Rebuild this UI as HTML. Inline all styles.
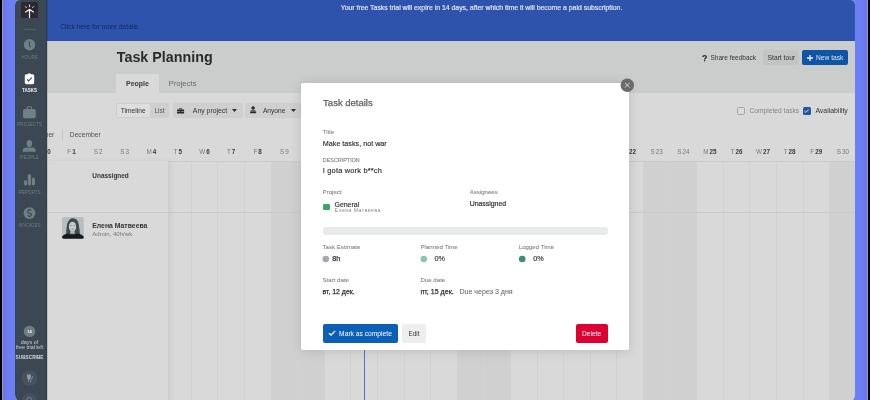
<!DOCTYPE html>
<html><head><meta charset="utf-8"><style>
*{box-sizing:border-box;margin:0;padding:0}
html,body{width:870px;height:400px;overflow:hidden;background:#000}
body{position:relative;font-family:"Liberation Sans",sans-serif;color:#333}
.a{position:absolute;white-space:nowrap;line-height:1}
svg{position:absolute;overflow:visible}
#glow{position:absolute;left:2.3px;top:-30px;width:865.5px;height:450px;background:#6a80f4;border-radius:18px;border-left:1px solid #8a9ab8;border-right:1px solid #8a9ab8;box-shadow:inset 3px 0 3px rgba(125,95,225,.45),inset -3px 0 3px rgba(125,95,225,.45)}
#app{position:absolute;left:15px;top:0;width:840px;height:404px;background:#d9d9d9;border-radius:5px 5px 10px 10px;overflow:hidden}
#in{position:absolute;left:-15px;top:0;width:870px;height:408px;will-change:transform}
#side{position:absolute;left:15px;top:0;width:31.5px;height:408px;background:#3c4754}
#banner{position:absolute;left:46px;top:0;width:810px;height:40.5px;background:#2d53ad}
#header{position:absolute;left:46px;top:40.5px;width:810px;height:52.3px;background:#cbcccc}
.col{position:absolute;top:161px;height:250px;width:1px;background:#d2d2d2}
.we{position:absolute;top:161px;height:250px;background:#d0d0d0}
.hl{position:absolute;left:46px;width:810px;height:1px;background:#cbcbcb}
.day{position:absolute;top:148.6px;font-size:6.3px;color:#7a7a7a;width:26.6px;text-align:center;line-height:1;white-space:nowrap}
.day b{color:#3a3a3a;font-weight:bold;margin-left:1px}
.day i{font-style:normal;margin-left:1px}
.sl{position:absolute;width:31.5px;text-align:center;font-size:4.6px;color:#6e7b82;left:13.8px;line-height:1;white-space:nowrap}
#modal{position:absolute;left:301px;top:83px;width:328px;height:267px;background:#fff;border-radius:2px;box-shadow:0 1px 12px rgba(0,0,0,.13)}
.lbl{position:absolute;font-size:6.1px;color:#888;-webkit-text-stroke:0.1px #888;white-space:nowrap;line-height:1}
.val{position:absolute;font-size:7.1px;color:#2f2f2f;-webkit-text-stroke:0.15px #2f2f2f;white-space:nowrap;line-height:1}
.btn{position:absolute;border-radius:2px}
</style></head><body>
<div id="glow"></div><div id="app"><div id="in">
<div class="we" style="left:84.80px;width:26.60px"></div>
<div class="we" style="left:111.40px;width:26.60px"></div>
<div class="we" style="left:271.00px;width:26.60px"></div>
<div class="we" style="left:297.60px;width:26.60px"></div>
<div class="we" style="left:457.20px;width:26.60px"></div>
<div class="we" style="left:483.80px;width:26.60px"></div>
<div class="we" style="left:643.40px;width:26.60px"></div>
<div class="we" style="left:670.00px;width:26.60px"></div>
<div class="we" style="left:829.60px;width:26.60px"></div>
<div class="we" style="left:856.20px;width:26.60px"></div>
<div class="col" style="left:4.50px"></div>
<div class="col" style="left:31.10px"></div>
<div class="col" style="left:57.70px"></div>
<div class="col" style="left:84.30px"></div>
<div class="col" style="left:110.90px"></div>
<div class="col" style="left:137.50px"></div>
<div class="col" style="left:164.10px"></div>
<div class="col" style="left:190.70px"></div>
<div class="col" style="left:217.30px"></div>
<div class="col" style="left:243.90px"></div>
<div class="col" style="left:270.50px"></div>
<div class="col" style="left:297.10px"></div>
<div class="col" style="left:323.70px"></div>
<div class="col" style="left:350.30px"></div>
<div class="col" style="left:376.90px"></div>
<div class="col" style="left:403.50px"></div>
<div class="col" style="left:430.10px"></div>
<div class="col" style="left:456.70px"></div>
<div class="col" style="left:483.30px"></div>
<div class="col" style="left:509.90px"></div>
<div class="col" style="left:536.50px"></div>
<div class="col" style="left:563.10px"></div>
<div class="col" style="left:589.70px"></div>
<div class="col" style="left:616.30px"></div>
<div class="col" style="left:642.90px"></div>
<div class="col" style="left:669.50px"></div>
<div class="col" style="left:696.10px"></div>
<div class="col" style="left:722.70px"></div>
<div class="col" style="left:749.30px"></div>
<div class="col" style="left:775.90px"></div>
<div class="col" style="left:802.50px"></div>
<div class="col" style="left:829.10px"></div>
<div class="col" style="left:855.70px"></div>
<div class="hl" style="top:160.6px"></div>
<div class="hl" style="top:212px"></div>
<div class="day" style="left:58.20px">F<b>1</b></div>
<div class="day" style="left:84.80px">S<i>2</i></div>
<div class="day" style="left:111.40px">S<i>3</i></div>
<div class="day" style="left:138.00px">M<b>4</b></div>
<div class="day" style="left:164.60px">T<b>5</b></div>
<div class="day" style="left:191.20px">W<b>6</b></div>
<div class="day" style="left:217.80px">T<b>7</b></div>
<div class="day" style="left:244.40px">F<b>8</b></div>
<div class="day" style="left:271.00px">S<i>9</i></div>
<div class="day" style="left:297.60px">S<i>10</i></div>
<div class="day" style="left:324.20px">M<b>11</b></div>
<div class="day" style="left:350.80px">T<b>12</b></div>
<div class="day" style="left:377.40px">W<b>13</b></div>
<div class="day" style="left:404.00px">T<b>14</b></div>
<div class="day" style="left:430.60px">F<b>15</b></div>
<div class="day" style="left:457.20px">S<i>16</i></div>
<div class="day" style="left:483.80px">S<i>17</i></div>
<div class="day" style="left:510.40px">M<b>18</b></div>
<div class="day" style="left:537.00px">T<b>19</b></div>
<div class="day" style="left:563.60px">W<b>20</b></div>
<div class="day" style="left:590.20px">T<b>21</b></div>
<div class="day" style="left:616.80px">F<b>22</b></div>
<div class="day" style="left:643.40px">S<i>23</i></div>
<div class="day" style="left:670.00px">S<i>24</i></div>
<div class="day" style="left:696.60px">M<b>25</b></div>
<div class="day" style="left:723.20px">T<b>26</b></div>
<div class="day" style="left:749.80px">W<b>27</b></div>
<div class="day" style="left:776.40px">T<b>28</b></div>
<div class="day" style="left:803.00px">F<b>29</b></div>
<div class="day" style="left:829.60px">S<i>30</i></div>
<div class="day" style="left:31.60px">T<b>30</b></div>
<div class="a" style="left:23.5px;top:131.5px;font-size:6.7px;color:#555">November</div>
<div class="a" style="left:61.5px;top:128.5px;width:1px;height:11px;background:#c8c8c8"></div>
<div class="a" style="left:69.8px;top:131.5px;font-size:6.7px;color:#555">December</div>
<div class="a" style="left:364px;top:161px;width:1px;height:250px;background:#4a78b8"></div>
<div class="a" style="left:46px;top:161px;width:122.5px;height:250px;background:#d9d9d9;box-shadow:2px 0 5px rgba(0,0,0,.06);border-right:1px solid #cdcdcd"></div>
<div class="hl" style="top:212px;width:122px"></div>
<div class="a" style="left:92.3px;top:173px;font-size:6.45px;font-weight:bold;color:#333">Unassigned</div>
<div class="a" style="left:62.2px;top:217px;width:21.8px;height:21.8px;border-radius:2px;overflow:hidden"><svg style="left:0;top:0" width="21.8" height="21.8" viewBox="0 0 22 22"><g><rect width="22" height="22" fill="#b7bfc1"/><path d="M4.2 20 Q4 12 5.2 7 Q7 1.2 11.2 1.3 Q15.6 1.5 16.8 7 Q17.8 12 18.2 19.5 Z" fill="#3f4a4d"/><ellipse cx="10.6" cy="9.8" rx="3.7" ry="5" fill="#c6cacb"/><path d="M8.5 14 L12.6 14 L13 17 L8.2 17 Z" fill="#b0b5b6"/><path d="M8.3 8.6H9.6M11.6 8.6H12.9" stroke="#555" stroke-width="0.6"/><path d="M9.6 12.3H11.8" stroke="#777" stroke-width="0.6"/><path d="M0 22 V20 Q1.5 17.2 6 16.8 Q10.5 18.8 15.5 16.8 Q20.5 17.2 22 20 V22 Z" fill="#171b1d"/></g></svg></div>
<div class="a" style="left:92.3px;top:223.3px;font-size:6.85px;font-weight:bold;color:#333">Елена Матвеева</div>
<div class="a" style="left:92.3px;top:231px;font-size:6.1px;color:#777">Admin, 40h/wk</div>
<div id="banner"></div><div id="header"></div>
<div class="a" style="left:340.7px;top:4.5px;font-size:6.89px;color:#dfe3ee;-webkit-text-stroke:0.2px #dfe3ee">Your free Tasks trial will expire in 14 days, after which time it will become a paid subscription.</div>
<div class="a" style="left:60.2px;top:23.9px;font-size:6.72px;color:#1c2850">Click here for more details</div>
<div class="a" style="left:116.8px;top:50.1px;font-size:14.3px;font-weight:bold;color:#2a2a2a">Task Planning</div>
<div class="a" style="left:116.3px;top:74.2px;width:42.5px;height:18.6px;background:#d9d9d9"></div>
<div class="a" style="left:126px;top:80.1px;font-size:7px;font-weight:bold;color:#3a3a3a">People</div>
<div class="a" style="left:168.5px;top:80.1px;font-size:7.8px;color:#6a6a6a">Projects</div>
<svg style="left:701.6px;top:54.6px" width="5" height="6.5" viewBox="0 0 5 6.5"><path d="M0.9 2Q0.9 0.6 2.6 0.6Q4.3 0.6 4.3 2Q4.3 2.9 3.3 3.3Q2.6 3.6 2.6 4.5" fill="none" stroke="#2a2a2a" stroke-width="1.35"/><circle cx="2.6" cy="5.8" r="0.75" fill="#2a2a2a"/></svg>
<div class="a" style="left:710.5px;top:55.3px;font-size:6.5px;color:#333">Share feedback</div>
<div class="btn" style="left:763.3px;top:50.3px;width:36.1px;height:14.3px;background:#c3c4c4"></div>
<div class="a" style="left:767.6px;top:55.3px;font-size:6.69px;color:#333">Start tour</div>
<div class="btn" style="left:802px;top:50.3px;width:45.5px;height:14.6px;background:#0f55a6"></div>
<svg style="left:806.5px;top:54.6px" width="6" height="6" viewBox="0 0 6 6"><path d="M3 0V6M0 3H6" stroke="#eef2f8" stroke-width="1.3"/></svg>
<div class="a" style="left:816px;top:55.3px;font-size:6.66px;color:#dbe3ef">New task</div>
<div class="btn" style="left:116.2px;top:103px;width:52.4px;height:14.5px;background:#cfcfcf"></div>
<div class="btn" style="left:117px;top:103.8px;width:33.2px;height:12.9px;background:#dedede;border-radius:1.5px"></div>
<div class="a" style="left:120.8px;top:107.9px;font-size:6.63px;color:#333">Timeline</div>
<div class="a" style="left:154.4px;top:107.9px;font-size:6.63px;color:#5a5a5a">List</div>
<div class="btn" style="left:172.8px;top:103px;width:69.8px;height:14.5px;background:#cfcfcf"></div>
<svg style="left:176.9px;top:107.5px" width="7.1" height="5.6" viewBox="0 0 7.1 5.6"><path d="M2.3 1.6V0.9Q2.3 0.4 2.8 0.4H4.3Q4.8 0.4 4.8 0.9V1.6" fill="none" stroke="#2a2a2a" stroke-width="0.8"/><rect x="0" y="1.5" width="7.1" height="4.1" rx="0.5" fill="#2a2a2a"/><rect x="0" y="3" width="7.1" height="0.5" fill="#cfcfcf"/><rect x="3" y="2.6" width="1.1" height="1.3" fill="#2a2a2a"/></svg>
<div class="a" style="left:192.8px;top:107.5px;font-size:6.88px;color:#333">Any project</div>
<svg style="left:232.3px;top:108.6px" width="5" height="3" viewBox="0 0 5 3"><path d="M0 0H5L2.5 3Z" fill="#2e2e2e"/></svg>
<div class="btn" style="left:245.2px;top:103px;width:60px;height:14.5px;background:#cfcfcf"></div>
<svg style="left:249.6px;top:106.1px" width="6.3" height="7.4" viewBox="0 0 6.3 7.4"><circle cx="3.1" cy="1.9" r="1.75" fill="#2a2a2a"/><path d="M0.1 7.3V5.7C0.1 4.7 1.2 4.2 3.1 4.2S6.2 4.7 6.2 5.7V7.3Z" fill="#2a2a2a"/><rect x="0" y="5.6" width="6.3" height="0.35" fill="#cfcfcf"/></svg>
<div class="a" style="left:262.9px;top:107.5px;font-size:6.63px;color:#333">Anyone</div>
<svg style="left:291px;top:108.6px" width="5" height="3" viewBox="0 0 5 3"><path d="M0 0H5L2.5 3Z" fill="#2e2e2e"/></svg>
<div class="btn" style="left:736.9px;top:106.8px;width:8px;height:7.8px;border:0.8px solid #a5a5a5;border-radius:1.5px;background:#dcdcdc"></div>
<div class="a" style="left:749.4px;top:107.6px;font-size:6.69px;color:#858585">Completed tasks</div>
<div class="btn" style="left:802.9px;top:106.8px;width:7.8px;height:7.8px;background:#1f56a0;border-radius:1.5px"></div>
<svg style="left:804.3px;top:108.6px" width="5" height="4" viewBox="0 0 5 4"><path d="M0.4 2L1.9 3.4L4.6 0.5" fill="none" stroke="#e6ecf4" stroke-width="0.9"/></svg>
<div class="a" style="left:815.4px;top:107.6px;font-size:6.9px;color:#333">Availability</div>
<div id="side"></div>
<div class="a" style="left:21.25px;top:2.25px;width:16.25px;height:16px;background:#2e2833;border-radius:1.5px"></div>
<svg style="left:0;top:0" width="870" height="400"><g stroke="#f4f4f4" stroke-width="1.2" stroke-linecap="round" fill="none"><path d="M29.5 17.6V9.8M25.6 12L29.5 9.5L33.4 12"/></g><g stroke="#e8e8e8" stroke-width="1" stroke-linecap="butt" fill="none"><path d="M29.5 4.6V7.1M25.2 6.3L26.7 7.9M33.8 6.3L32.3 7.9"/></g></svg>
<div class="a" style="left:24px;top:28.8px;width:11.5px;height:0.8px;background:#55606a"></div>
<svg style="left:0;top:0" width="870" height="400"><circle cx="29.5" cy="44.8" r="5.7" fill="#6c8086"/><path d="M29.3 41.2V45.6L30.9 47.1" fill="none" stroke="#3c4754" stroke-width="1.05"/><path d="M26.2 74.2H27.8A1.7 1.7 0 0 1 30.8 74.2H32.6Q34.2 74.2 34.2 75.8V82.6Q34.2 84.2 32.6 84.2H26.4Q24.8 84.2 24.8 82.6V75.8Q24.8 74.2 26.2 74.2Z" fill="#fbfbfb"/><path d="M27.1 79.3L28.6 80.9L31.8 77.6" fill="none" stroke="#3c4754" stroke-width="1.1"/><rect x="23" y="109" width="12.8" height="9.2" rx="1.6" fill="#6c8086"/><path d="M27.2 109.5V107.6Q27.2 106.8 28 106.8H30.8Q31.6 106.8 31.6 107.6V109.5" fill="none" stroke="#6c8086" stroke-width="1.1"/><ellipse cx="29.4" cy="143.5" rx="2.8" ry="3.5" fill="#6c8086"/><path d="M22.8 151.8V150.3Q22.8 147.4 26 147.4H32.6Q35.6 147.4 35.6 150.3V151.8Z" fill="#6c8086"/><rect x="24" y="180" width="3" height="5.4" rx="1.5" fill="#6c8086"/><rect x="27.8" y="174" width="3.2" height="11.4" rx="1.6" fill="#6c8086"/><rect x="31.9" y="177.6" width="3.1" height="7.8" rx="1.55" fill="#6c8086"/><circle cx="29.5" cy="213.1" r="5.9" fill="#6c8086"/><path d="M31.2 210.9Q30.8 209.9 29.5 209.9Q27.6 209.9 27.6 211.4Q27.6 212.8 29.5 213.1Q31.4 213.4 31.4 214.8Q31.4 216.3 29.5 216.3Q28.1 216.3 27.7 215.2M29.5 208.8V209.9M29.5 216.3V217.4" fill="none" stroke="#3c4754" stroke-width="1.15"/><circle cx="29.5" cy="331.4" r="5.7" fill="#6b7e84"/><circle cx="29.5" cy="378.2" r="7.9" fill="#465260"/><path d="M27 376.6Q26.9 374.2 27.9 373.9L28.9 374.9L29.8 373.9Q31.1 374.1 31 376.6Q30.9 379.7 29 380.1Q27.1 379.7 27 376.6Z" fill="#929da2"/><path d="M28.7 379.6V382.4M32.6 376.2Q32.3 378.2 31.4 379.3Q30.6 380.4 30.6 382.4" fill="none" stroke="#8d989d" stroke-width="0.8"/><circle cx="29.5" cy="401" r="7.9" fill="#465260"/><circle cx="29.2" cy="399.4" r="2.1" fill="none" stroke="#7f8a90" stroke-width="0.8"/></svg>
<div class="sl" style="top:55.6px">HOURS</div>
<div class="sl" style="top:89.2px;color:#f2f2f2;font-weight:bold;font-size:4.5px">TASKS</div>
<div class="sl" style="top:122.8px">PROJECTS</div>
<div class="sl" style="top:156.4px">PEOPLE</div>
<div class="sl" style="top:190.9px">REPORTS</div>
<div class="sl" style="top:224.4px">INVOICES</div>
<div class="sl" style="top:329.7px;font-size:4.3px;font-weight:bold;color:#f0f0f0">14</div>
<div class="sl" style="top:339.5px;font-size:5.4px;color:#c9cdd1">days of</div>
<div class="sl" style="top:344.6px;font-size:5.5px;color:#c9cdd1;letter-spacing:-0.1px">free trial left</div>
<div class="sl" style="top:355.9px;font-size:4.75px;font-weight:bold;color:#d5d9dd">SUBSCRIBE</div>
<div class="a" style="left:46px;top:0;width:1.5px;height:408px;background:rgba(0,0,0,.12)"></div>
<div id="modal"></div>
<div class="a" style="left:323.1px;top:98px;font-size:9.5px;color:#5e5e5e;-webkit-text-stroke:0.25px #5e5e5e">Task details</div>
<div class="lbl" style="left:322.8px;top:129px">Title</div>
<div class="val" style="left:322.8px;top:139.8px;font-size:7.2px">Make tasks, not war</div>
<div class="lbl" style="left:322.8px;top:158.2px;font-size:5.41px;color:#7a7a7a">DESCRIPTION</div>
<div class="val" style="left:322.8px;top:166.6px;font-size:7.4px;letter-spacing:0.2px">I gota work b**ch</div>
<div class="lbl" style="left:322.6px;top:189.4px">Project</div>
<div class="a" style="left:322.6px;top:203.5px;width:7px;height:6.8px;background:#3ea66b;border-radius:1px"></div>
<div class="val" style="left:334.5px;top:201.5px;font-size:6.94px">General</div>
<div class="a" style="left:334.5px;top:208.1px;font-size:5.2px;letter-spacing:0.45px;color:#8a8a8a">Елена Матвеева</div>
<div class="lbl" style="left:469.7px;top:189.4px">Assignees</div>
<div class="val" style="left:469.7px;top:201.1px;font-size:6.9px;color:#333;-webkit-text-stroke:0.2px #333">Unassigned</div>
<div class="a" style="left:322.6px;top:227px;width:285.1px;height:8px;background:#e9eaea;border-radius:3px"></div>
<div class="lbl" style="left:322.5px;top:244.3px">Task Estimate</div>
<div class="lbl" style="left:420.5px;top:244.3px">Planned Time</div>
<div class="lbl" style="left:518.8px;top:244.3px">Logged Time</div>
<svg style="left:0;top:0" width="870" height="400"><circle cx="325.8" cy="259" r="3.3" fill="#a6a9af"/><circle cx="423.8" cy="259" r="3.3" fill="#8fc3ae"/><circle cx="522.2" cy="259" r="3.3" fill="#3b8f74"/></svg>
<div class="val" style="left:332.3px;top:255.4px;font-size:7.2px;color:#333;-webkit-text-stroke:0.25px #333">8h</div>
<div class="val" style="left:434.5px;top:255.4px;font-size:7.2px;color:#3a3a3a">0%</div>
<div class="val" style="left:533.2px;top:255.4px;font-size:7.2px;color:#3a3a3a">0%</div>
<div class="lbl" style="left:322.5px;top:277.1px">Start date</div>
<div class="lbl" style="left:420.5px;top:277.1px">Due date</div>
<div class="val" style="left:322.5px;top:288.8px;font-size:6.91px;color:#333;-webkit-text-stroke:0.25px #333">вт, 12 дек.</div>
<div class="val" style="left:420.5px;top:288.8px;font-size:7.1px;color:#333;-webkit-text-stroke:0.25px #333">пт, 15 дек.</div>
<div class="val" style="left:459.4px;top:288.8px;font-size:7.09px;color:#666;-webkit-text-stroke:0.05px #666">Due через 3 дня</div>
<div class="btn" style="left:322.6px;top:323.7px;width:75.4px;height:18.9px;background:#0b5fb6"></div>
<svg style="left:0;top:0" width="870" height="400"><path d="M329 333.2L331.1 335.1L335.1 330.9" fill="none" stroke="#fff" stroke-width="1.35"/></svg>
<div class="a" style="left:339.1px;top:330.8px;font-size:6.7px;color:#fff">Mark as complete</div>
<div class="btn" style="left:402.2px;top:323.7px;width:23.6px;height:18.9px;background:#eeeeee"></div>
<div class="a" style="left:408.5px;top:330.7px;font-size:6.33px;color:#333">Edit</div>
<div class="btn" style="left:575.9px;top:323.75px;width:31.85px;height:19px;background:#dc0033"></div>
<div class="a" style="left:581.9px;top:330.7px;font-size:6.69px;color:#fff">Delete</div>
<svg style="left:0;top:0" width="870" height="400"><circle cx="627.3" cy="85.2" r="6.7" fill="#6a6a6a"/><path d="M625 82.9L629.6 87.5M629.6 82.9L625 87.5" stroke="#f0f0f0" stroke-width="0.8"/></svg>
</div></div>
</body></html>
